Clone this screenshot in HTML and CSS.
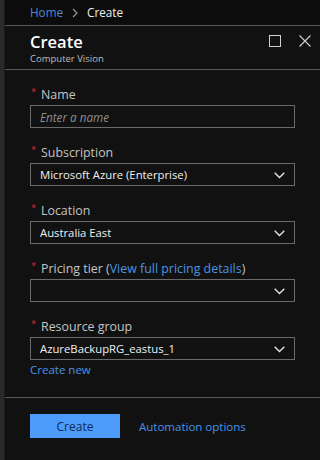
FILE: index.html
```html
<!DOCTYPE html>
<html lang="en">
<head>
<meta charset="utf-8">
<title>Create - Computer Vision</title>
<link rel="stylesheet" href="styles.css">
</head>
<body>
<div class="strip"></div>
<div class="panel">
  <nav class="crumbs">
    <a class="crumb-link">Home</a>
    <svg class="crumb-sep" width="6" height="10" viewBox="0 0 6 10"><path d="M1 1 L5 5 L1 9" fill="none" stroke="#9a9a9a" stroke-width="1.1"/></svg>
    <span class="crumb-current">Create</span>
  </nav>
  <header class="head">
    <div class="titles">
      <h1 class="title">Create</h1>
      <div class="subtitle">Computer Vision</div>
    </div>
    <div class="head-icons">
      <svg width="12" height="12" viewBox="0 0 12 12"><rect x="0.5" y="0.5" width="11" height="11" fill="none" stroke="#d0d0d0" stroke-width="1"/></svg>
      <svg width="12" height="12" viewBox="0 0 12 12"><path d="M0.5 0.5 L11.5 11.5 M11.5 0.5 L0.5 11.5" fill="none" stroke="#d0d0d0" stroke-width="1.1"/></svg>
    </div>
  </header>
  <main class="form">
    <div class="field">
      <div class="label"><span class="req">*</span>Name</div>
      <div class="box"><span class="placeholder">Enter a name</span></div>
    </div>
    <div class="field">
      <div class="label"><span class="req">*</span>Subscription</div>
      <div class="box"><span class="value">Microsoft Azure (Enterprise)</span><svg class="chev" width="11" height="7" viewBox="0 0 11 7"><path d="M0.7 0.7 L5.5 5.5 L10.3 0.7" fill="none" stroke="#e8e8e8" stroke-width="1.3"/></svg></div>
    </div>
    <div class="field">
      <div class="label"><span class="req">*</span>Location</div>
      <div class="box"><span class="value">Australia East</span><svg class="chev" width="11" height="7" viewBox="0 0 11 7"><path d="M0.7 0.7 L5.5 5.5 L10.3 0.7" fill="none" stroke="#e8e8e8" stroke-width="1.3"/></svg></div>
    </div>
    <div class="field">
      <div class="label"><span class="req">*</span>Pricing tier (<a class="link">View full pricing details</a>)</div>
      <div class="box"><span class="value"></span><svg class="chev" width="11" height="7" viewBox="0 0 11 7"><path d="M0.7 0.7 L5.5 5.5 L10.3 0.7" fill="none" stroke="#e8e8e8" stroke-width="1.3"/></svg></div>
    </div>
    <div class="field field-last">
      <div class="label"><span class="req">*</span>Resource group</div>
      <div class="box"><span class="value">AzureBackupRG_eastus_1</span><svg class="chev" width="11" height="7" viewBox="0 0 11 7"><path d="M0.7 0.7 L5.5 5.5 L10.3 0.7" fill="none" stroke="#e8e8e8" stroke-width="1.3"/></svg></div>
      <a class="link create-new">Create new</a>
    </div>
  </main>
  <footer class="foot">
    <button class="btn-primary">Create</button>
    <a class="link foot-link">Automation options</a>
  </footer>
</div>
</body>
</html>
```
FILE: styles.css
```css
* { box-sizing: border-box; }
html, body { height: 100%; }
body {
  margin: 0;
  background: #111111;
  display: flex;
  font-family: "Open Sans", "Noto Sans", sans-serif;
  color: #d6d6d6;
  overflow: hidden;
}
.strip {
  width: 5px;
  background: #2a2a2a;
  border-right: 1px solid #1b1b1b;
  flex: none;
}
.panel {
  flex: 1;
  display: flex;
  flex-direction: column;
  background: #111111;
}
.crumbs {
  height: 26px;
  border-bottom: 1px solid #575757;
  background: #0c0c0c;
  display: flex;
  align-items: center;
  padding: 0 0 1px 25px;
  font-size: 11.7px;
  gap: 9px;
}
.crumb-link { color: #4a8ad4; }
.crumb-current { color: #f0f0f0; }
.crumb-sep { margin-top: 1px; }
.head {
  height: 44px;
  border-bottom: 1px solid #575757;
  display: flex;
  justify-content: space-between;
  padding: 5px 9px 0 25px;
}
.title {
  margin: 0;
  font-size: 16.5px;
  line-height: 22px;
  font-weight: 600;
  color: #ffffff;
}
.subtitle {
  font-size: 9.5px;
  line-height: 12px;
  color: #bdbdbd;
}
.head-icons {
  display: flex;
  gap: 18px;
  margin-top: 4px;
}
.form {
  padding: 17px 25px 0;
}
.field { margin-bottom: 17px; }
.field-last { margin-bottom: 19px; }
.label {
  font-size: 12.4px;
  line-height: 16px;
  margin-bottom: 2px;
  color: #c4c4c4;
  display: flex;
  align-items: flex-start;
}
.req {
  color: #d9293b;
  font-size: 9.5px;
  line-height: 10px;
  width: 10px;
  margin-left: 1px;
  flex: none;
}
.box {
  height: 23px;
  border: 1px solid #6a6a6a;
  display: flex;
  align-items: center;
  justify-content: space-between;
  padding: 0 9px 0 9px;
  font-size: 11.3px;
}
.value { color: #f0f0f0; }
.placeholder { color: #8e8e8e; font-style: italic; font-size: 11.7px; }
.chev { flex: none; margin-top: 1px; }
.link { color: #4a94e6; cursor: pointer; }
.create-new {
  display: block;
  font-size: 11.5px;
  line-height: 16px;
  margin-top: 2px;
}
.foot {
  border-top: 1px solid #575757;
  padding: 16px 25px 0;
  display: flex;
  align-items: center;
  gap: 19px;
}
.btn-primary {
  width: 90px;
  height: 24px;
  border: none;
  background: #4d9cfb;
  color: #0d2a55;
  font-family: inherit;
  font-size: 12px;
  padding: 0;
}
.foot-link { font-size: 11.5px; }
```
